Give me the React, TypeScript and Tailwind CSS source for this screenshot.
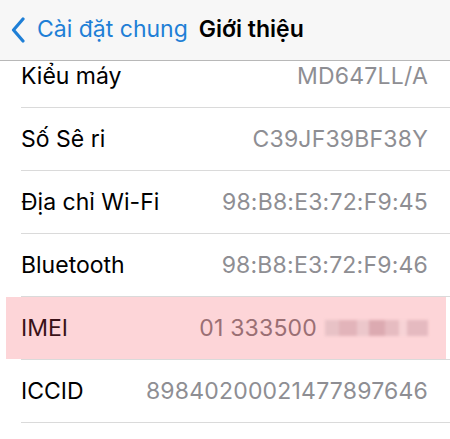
const rows = [
  { label: "Kiểu máy", value: "MD647LL/A" },
  { label: "Số Sê ri", value: "C39JF39BF38Y" },
  { label: "Địa chỉ Wi-Fi", value: "98:B8:E3:72:F9:45" },
  { label: "Bluetooth", value: "98:B8:E3:72:F9:46" },
  { label: "IMEI", value: "01 333500", marked: true },
  { label: "ICCID", value: "89840200021477897646" },
];

export default function App() {
  return (
    <div className="relative w-[450px] h-[439px] overflow-hidden bg-white font-['Inter','Liberation_Sans',sans-serif]">
      {/* nav bar sits over the scrolled list */}
      <header className="absolute top-0 left-0 right-0 z-10 h-[61px] bg-[#f7f7f7] border-b border-[#b8b8b8] flex items-center pl-[11px] pb-[1px]">
        <svg width="14" height="26" viewBox="0 0 14 26" className="text-[#1f7fd6]">
          <path d="M12 2 L2.5 13 L12 24" fill="none" stroke="currentColor" strokeWidth="3.2" strokeLinecap="round" strokeLinejoin="round" />
        </svg>
        <span className="ml-[12px] text-[23px] text-[#1f7fd6]">Cài đặt chung</span>
        <span className="ml-[11px] text-[23px] font-semibold text-black">Giới thiệu</span>
      </header>

      <div className="pt-[45px]">
        {rows.map((r) => (
          <div key={r.label} className="relative h-[63px] pl-[21px]">
            {r.marked && <div className="absolute left-[6px] right-[4px] top-0 bottom-[1px] bg-[#fdd5d8]" />}
            <div className="relative h-full flex items-center justify-between pr-[22px] border-b border-[#dadada] text-[23px]">
              <span className={r.marked ? "text-[#3a1218]" : "text-black"}>{r.label}</span>
              {r.marked ? (
                <span className="flex items-center gap-[8px] tracking-[0.2px] text-[#9a6f74]">
                  {r.value}
                  <span className="flex h-[16px] w-[103px] blur-[1.5px]">
                    <span className="w-[14px] bg-[#e8c2c6]" />
                    <span className="w-[18px] bg-[#e2b4ba]" />
                    <span className="w-[12px] bg-[#ecc7cb]" />
                    <span className="w-[16px] bg-[#dcaab1]" />
                    <span className="w-[14px] bg-[#e6bcc1]" />
                    <span className="w-[8px] bg-[#f7d3d6]" />
                    <span className="w-[21px] bg-[#e5bac0]" />
                  </span>
                </span>
              ) : (
                <span className="tracking-[0.2px] text-[#8e8e93]">{r.value}</span>
              )}
            </div>
          </div>
        ))}
      </div>
    </div>
  );
}
